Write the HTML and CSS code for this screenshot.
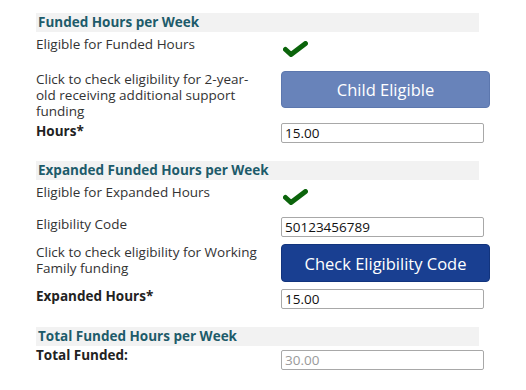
FILE: index.html
```html
<!DOCTYPE html>
<html lang="en">
<head>
  <meta charset="UTF-8" />
  <meta name="viewport" content="width=device-width, initial-scale=1.0" />
  <title>Funded Hours</title>
  <link rel="stylesheet" href="styles.css">
</head>
<body>
  <div class="form">
    <div class="section first">Funded Hours per Week</div>

    <div class="row r-elig">
      <span class="label">Eligible for Funded Hours</span>
      <svg class="tick" width="25" height="16" viewBox="0 0 25 16">
        <polyline points="2.5,8.5 8,13.5 22.5,2.5" />
      </svg>
    </div>

    <div class="row r-click">
      <span class="label">Click to check eligibility for 2-year-old receiving additional support funding</span>
      <button class="btn btn-light">Child Eligible</button>
    </div>

    <div class="row r-input">
      <span class="label bold">Hours*</span>
      <input class="field" type="text" value="15.00">
    </div>

    <div class="section">Expanded Funded Hours per Week</div>

    <div class="row r-elig">
      <span class="label">Eligible for Expanded Hours</span>
      <svg class="tick" width="25" height="16" viewBox="0 0 25 16">
        <polyline points="2.5,8.5 8,13.5 22.5,2.5" />
      </svg>
    </div>

    <div class="row r-code first-code">
      <span class="label">Eligibility Code</span>
      <input class="field" type="text" value="50123456789">
    </div>

    <div class="row r-click2">
      <span class="label">Click to check eligibility for Working Family funding</span>
      <button class="btn btn-dark">Check Eligibility Code</button>
    </div>

    <div class="row r-code">
      <span class="label bold">Expanded Hours*</span>
      <input class="field" type="text" value="15.00">
    </div>

    <div class="section">Total Funded Hours per Week</div>

    <div class="row r-total">
      <span class="label bold">Total Funded:</span>
      <input class="field" type="text" value="30.00" disabled>
    </div>
  </div>
</body>
</html>
```

FILE: styles.css
```css
* { box-sizing: border-box; }
body {
  margin: 0;
  font-family: "Open Sans", "Noto Sans", sans-serif;
  font-size: 13.5px;
  line-height: 16px;
  color: #333;
  background: #fff;
}
.form {
  padding-left: 36px;
  width: 500px;
}
.section {
  width: 443px;
  height: 19px;
  margin-top: 18px;
  padding-left: 2px;
  background: #f2f2f2;
  color: #1d5b6a;
  font-weight: bold;
  font-size: 13.5px;
  line-height: 19px;
}
.section.first {
  margin-top: 13px;
}
.row {
  display: grid;
  grid-template-columns: 245px 209px;
  align-items: start;
}
.label {
  padding-right: 19px;
}
.bold {
  font-weight: bold;
  color: #222;
}
.r-elig { margin-top: 4px; }
.r-click { margin-top: 14px; }
.r-input { margin-top: 4px; }
.r-code { margin-top: 7px; }
.r-code.first-code { margin-top: 12px; }
.r-code .label { margin-top: -1px; }
.r-click2 { margin-top: 7px; }
.r-total { margin-top: 1px; }
.r-total .field { margin-top: 3px; }
.tick {
  margin-top: 5px;
  margin-left: 2px;
}
.tick polyline {
  fill: none;
  stroke: #0b640b;
  stroke-width: 5;
  stroke-linecap: round;
  stroke-linejoin: round;
}
.btn {
  width: 209px;
  height: 37px;
  border-radius: 4px;
  color: #fff;
  font-family: inherit;
  font-size: 16.5px;
  cursor: pointer;
}
.btn-light {
  background: #6883ba;
  border: 1px solid #5c77ae;
}
.btn-dark {
  height: 38px;
  background: #193f91;
  border: 1px solid #12347d;
}
.field {
  width: 203px;
  height: 20px;
  padding: 0 3px;
  border: 1px solid #a8a8a8;
  border-radius: 2px;
  font-family: inherit;
  font-size: 13.5px;
  color: #111;
  background: #fff;
}
.field:disabled {
  color: #9a9a9a;
}
```
